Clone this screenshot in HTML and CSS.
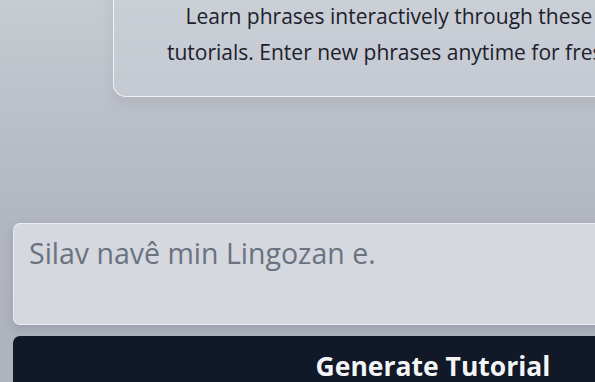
FILE: index.html
```html
<!DOCTYPE html>
<html lang="en">
<head>
<meta charset="utf-8">
<title>Lingozan Tutorial</title>
<link rel="stylesheet" href="styles.css">
</head>
<body>
<main class="page">
  <section class="intro-card">
    <p class="intro-text">Learn phrases interactively through these dynamic tutorials. Enter new phrases anytime for fresh lessons.</p>
  </section>
  <form class="phrase-form">
    <textarea class="phrase-input" placeholder="Silav navê min Lingozan e."></textarea>
    <button type="button" class="generate-btn">Generate Tutorial</button>
  </form>
</main>
</body>
</html>
```
FILE: styles.css
```css
html, body {
  margin: 0;
  padding: 0;
  height: 100%;
  overflow: hidden;
}
body {
  background: linear-gradient(180deg, #c7cbd2 0%, #bcc0c8 28%, #b1b6c0 58%, #adb2bc 100%);
  font-family: "Open Sans", "Noto Sans", sans-serif;
  color: #1f2937;
}
.page {
  width: 840px;
  margin-left: 13px;
  display: flex;
  flex-direction: column;
  align-items: center;
}
.intro-card {
  width: 640px;
  box-sizing: border-box;
  margin-top: -33px;
  padding: 30px 50px 26px;
  background: rgba(205, 209, 217, 0.5);
  border: 1px solid rgba(255, 255, 255, 0.75);
  border-radius: 13px;
  box-shadow: 0 6px 14px rgba(80, 90, 110, 0.12);
}
.intro-text {
  margin: 0;
  text-align: center;
  font-size: 21px;
  line-height: 36px;
  color: #1c212c;
}
.phrase-form {
  align-self: stretch;
  margin-top: 126px;
  display: flex;
  flex-direction: column;
  gap: 11px;
}
.phrase-input {
  display: block;
  box-sizing: border-box;
  width: 100%;
  height: 102px;
  padding: 10px 15px;
  resize: none;
  border: 1px solid rgba(255, 255, 255, 0.5);
  border-radius: 7px;
  background: #d5d8de;
  font-family: inherit;
  font-size: 28.5px;
  line-height: 39px;
  color: #1f2937;
  box-shadow: 0 4px 10px rgba(70, 80, 100, 0.2);
  outline: none;
}
.phrase-input::placeholder {
  color: #6b7280;
}
.generate-btn {
  display: block;
  width: 100%;
  height: 64px;
  border: none;
  border-radius: 7px;
  background: #111827;
  color: #f3f4f6;
  font-family: inherit;
  font-size: 26.5px;
  font-weight: 700;
  line-height: 40px;
  padding: 10px 0 14px;
  text-align: center;
}
```
